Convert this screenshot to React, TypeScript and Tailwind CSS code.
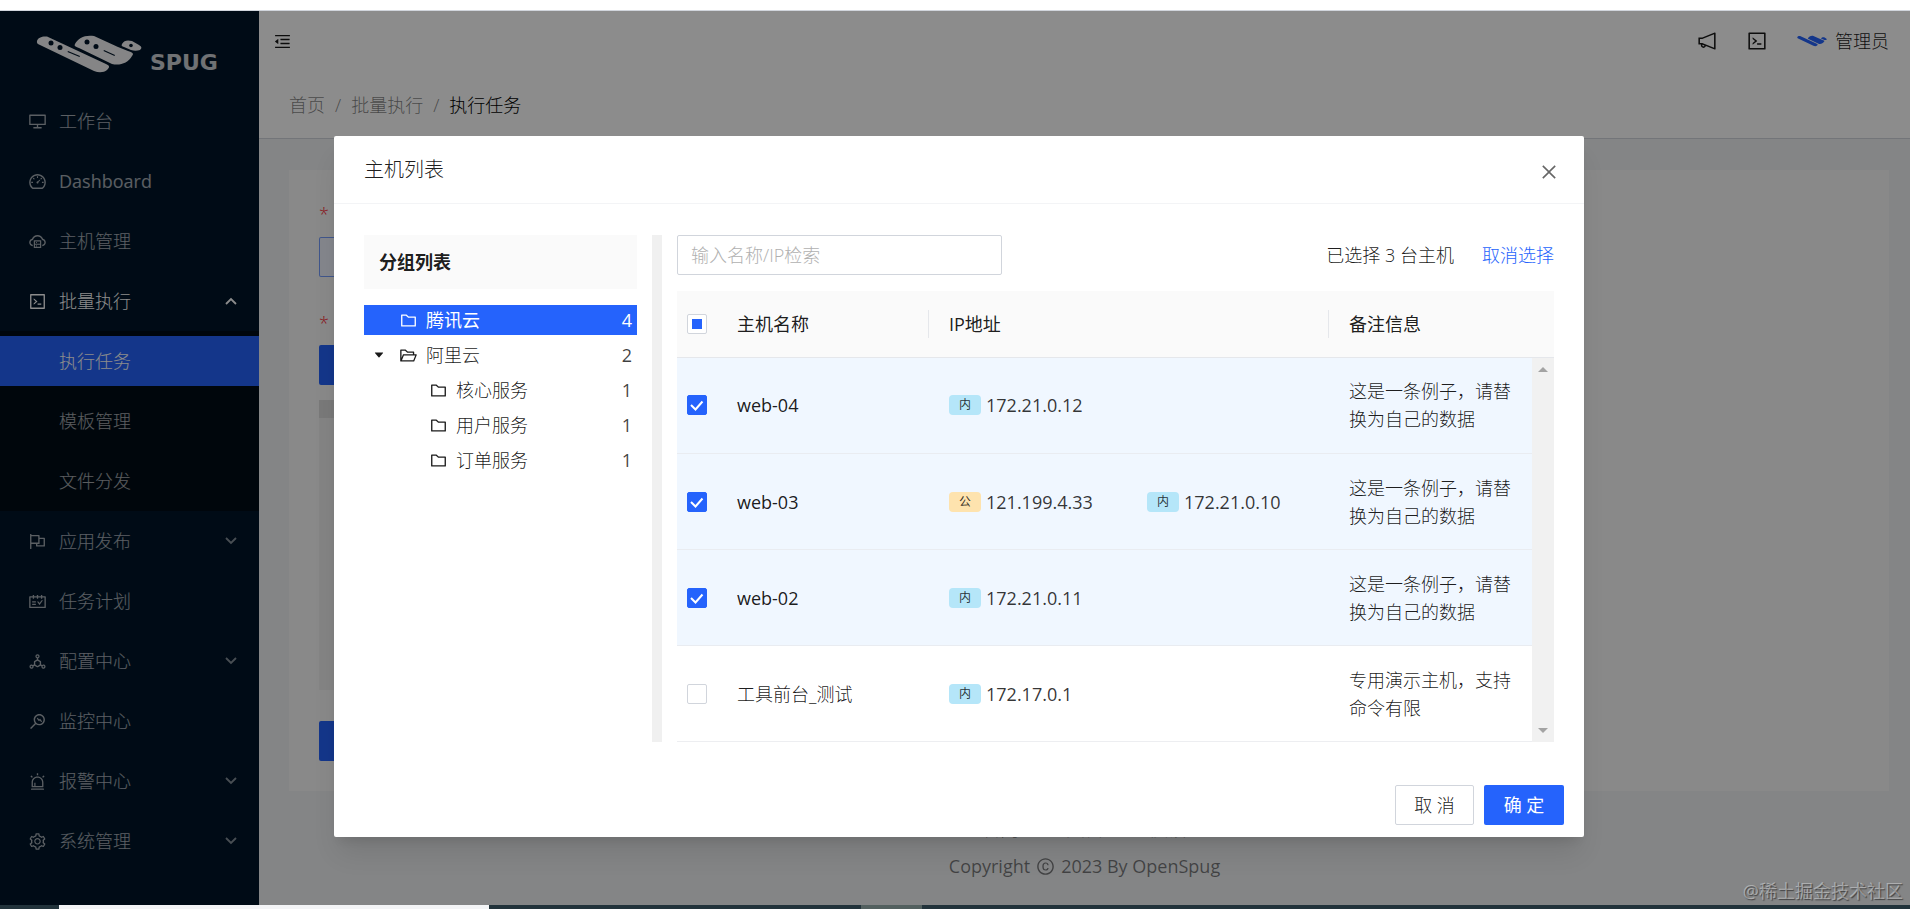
import { useState } from 'react';
import {
    AiOutlineAlert, AiOutlineCloudServer, AiOutlineCode, AiOutlineCopyright, AiOutlineDashboard,
    AiOutlineDeploymentUnit, AiOutlineDesktop, AiOutlineFlag, AiOutlineFolder, AiOutlineFolderOpen,
    AiOutlineMenuFold, AiOutlineMonitor, AiOutlineNotification, AiOutlineSchedule, AiOutlineSetting,
    AiOutlineClose, AiFillCaretDown,
} from 'react-icons/ai';

const menus = [
    { label: '工作台', icon: AiOutlineDesktop },
    { label: 'Dashboard', icon: AiOutlineDashboard },
    { label: '主机管理', icon: AiOutlineCloudServer },
    { label: '批量执行', icon: AiOutlineCode, open: true, children: ['执行任务', '模板管理', '文件分发'] },
    { label: '应用发布', icon: AiOutlineFlag, arrow: true },
    { label: '任务计划', icon: AiOutlineSchedule },
    { label: '配置中心', icon: AiOutlineDeploymentUnit, arrow: true },
    { label: '监控中心', icon: AiOutlineMonitor },
    { label: '报警中心', icon: AiOutlineAlert, arrow: true },
    { label: '系统管理', icon: AiOutlineSetting, arrow: true },
];

const groups = [
    { name: '腾讯云', count: 4, level: 0 },
    { name: '阿里云', count: 2, level: 0, open: true },
    { name: '核心服务', count: 1, level: 1 },
    { name: '用户服务', count: 1, level: 1 },
    { name: '订单服务', count: 1, level: 1 },
];

const hosts = [
    { name: 'web-04', ips: [['内', '172.21.0.12']], desc: '这是一条例子，请替换为自己的数据' },
    { name: 'web-03', ips: [['公', '121.199.4.33'], ['内', '172.21.0.10']], desc: '这是一条例子，请替换为自己的数据' },
    { name: 'web-02', ips: [['内', '172.21.0.11']], desc: '这是一条例子，请替换为自己的数据' },
    { name: '工具前台_测试', ips: [['内', '172.17.0.1']], desc: '专用演示主机，支持命令有限' },
];

// light latin glyphs look too thin next to the chinese ones
const weightOf = (text: string) => (/[\u4e00-\u9fa5]/.test(text) ? 'font-light' : 'font-normal');

function SpugMark({ className, holes }: { className: string; holes?: boolean }) {
    return (
        <svg viewBox="0 0 106 38" className={className} fill="currentColor" aria-hidden="true">
            <path d="M1 6C2 2.500 6 1 11 1.500L70 29C74 31 74 32 71 35C68 37.500 63 38 58 36L4 10C1.500 9 .500 8 1 6Z" />
            <path d="M39 9C42 3 49-.500 58 1L82 12L92 16C97 18 98 18 96 21C92 28 84 31 76 29L43 13C39 11 38 11 39 9Z" />
            <path d="M86 9C88 5 92 5 96 6L103 10C106 12 106 13 104 15C101 16 98 16 95 15L88 12C86 11 85 11 86 9Z" />
            {holes && (
                <g className="fill-[#001529]">
                    <circle cx="15" cy="8" r="2.500" />
                    <circle cx="24" cy="12.500" r="2.500" />
                    <circle cx="51" cy="7" r="2.500" />
                    <circle cx="60" cy="11.500" r="2.500" />
                    <circle cx="95" cy="10.500" r="1.800" />
                    <path d="M32 16L44 21L43.500 22L31.500 17Z" />
                    <path d="M68 15L79 20L78.500 21L67.500 16Z" />
                </g>
            )}
        </svg>
    );
}

function Chevron({ up }: { up?: boolean }) {
    return (
        <svg
            viewBox="0 0 12 8"
            className={`w-3 h-2 ${up ? '' : 'opacity-80'}`}
            fill="none"
            stroke="currentColor"
            strokeWidth="1.800"
            aria-hidden="true"
        >
            <path d={up ? 'M1 7L6 2L11 7' : 'M1 1L6 6L11 1'} />
        </svg>
    );
}

function Sidebar() {
    return (
        <aside className="w-[259px] shrink-0 bg-[#001529] text-white/65">
            <div className="h-20 pl-9 pt-6 flex text-white/95">
                <SpugMark className="w-[106px] h-[38px]" holes />
                <span className="pl-2 pt-[14px] text-[22px] leading-7 font-['DejaVu_Sans'] font-bold text-white/80">SPUG</span>
            </div>
            <nav>
                {menus.map((item) => {
                    const Icon = item.icon;
                    return (
                        <div key={item.label}>
                            <div className="h-[60px] flex items-center">
                                <button className={`w-full h-[50px] pl-7 pr-[22px] flex items-center gap-3 text-left ${item.open ? 'text-white' : ''}`}>
                                    <Icon size={19} />
                                    <span className={`flex-1 ${weightOf(item.label)}`}>{item.label}</span>
                                    {(item.open || item.arrow) && <Chevron up={item.open} />}
                                </button>
                            </div>
                            {item.children && (
                                <div className="bg-[#000c17] py-[5px] flex flex-col gap-[10px]">
                                    {item.children.map((child, i) => (
                                        <a
                                            key={child}
                                            href="#"
                                            className={`h-[50px] pl-[59px] flex items-center ${i === 0 ? 'bg-[#2563fc] text-white' : ''}`}
                                        >
                                            {child}
                                        </a>
                                    ))}
                                </div>
                            )}
                        </div>
                    );
                })}
            </nav>
        </aside>
    );
}

function TaskPage() {
    return (
        <div className="flex-1 flex flex-col bg-[#f0f2f5]">
            <header className="h-[60px] bg-white flex items-center pl-[14px] pr-[21px]">
                <button aria-label="收起菜单"><AiOutlineMenuFold size={19} /></button>
                <div className="ml-auto flex items-center">
                    <AiOutlineNotification size={22} />
                    <AiOutlineCode size={22} className="ml-7" />
                    <SpugMark className="w-[30px] h-[14px] ml-[29px] text-[#2563fc]" />
                    <span className="ml-2">管理员</span>
                </div>
            </header>
            <div className="h-[68px] bg-white border-b border-gray-300 pl-[30px] flex items-center gap-[10px] text-black/50">
                <a href="#">首页</a>
                <span>/</span>
                <a href="#">批量执行</a>
                <span>/</span>
                <span className="text-black">执行任务</span>
            </div>
            <form className="ml-[30px] mr-[21px] mt-[31px] p-[30px] bg-[#fafafa]">
                <div className="h-[37px] leading-7 text-red-500">*</div>
                <div className="w-[400px] h-10 border border-[#2563fc]/60 rounded-xs bg-[#f0f5ff]" />
                <div className="h-[68px] flex items-end pb-2 leading-7 text-red-500">*</div>
                <div className="w-[200px] h-10 rounded-xs bg-[#2563fc]" />
                <div className="mt-[15px] h-[18px] w-[900px] bg-[#dcdcdc]" />
                <div className="h-[272px] w-[900px] bg-[#f0f0f0]" />
                <div className="mt-[31px] w-[120px] h-10 rounded-xs bg-[#2563fc]" />
            </form>
            <footer className="pt-6 text-center text-black/50">
                <div className="h-[37px] flex justify-center gap-12">
                    <a href="#">官网</a>
                    <a href="#">文档</a>
                    <a href="#">反馈</a>
                </div>
                <div className="flex justify-center items-center gap-[6px] font-normal">
                    Copyright <AiOutlineCopyright size={19} /> 2023 By OpenSpug
                </div>
            </footer>
        </div>
    );
}

function CheckBox({ checked, partial, label, onChange }: {
    checked?: boolean; partial?: boolean; label: string; onChange: () => void;
}) {
    return (
        <label className="relative block w-5 h-5">
            <input
                type="checkbox"
                aria-label={label}
                checked={!!checked}
                onChange={onChange}
                className="block w-5 h-5 appearance-none bg-white border border-gray-300 rounded-xs checked:bg-[#2563fc] checked:border-[#2563fc]"
            />
            {partial && <span className="absolute inset-[5px] bg-[#2563fc]" />}
            {checked && (
                <svg viewBox="0 0 20 20" className="absolute inset-0 w-5 h-5" fill="none" stroke="white" strokeWidth="2">
                    <path d="M4 10L8.500 14.500L15.500 6.500" />
                </svg>
            )}
        </label>
    );
}

function GroupTree() {
    return (
        <div className="w-[273px] shrink-0">
            <div className="h-[54px] bg-[#fafafa] px-[15px] flex items-center font-bold">分组列表</div>
            <ul className="mt-4 flex flex-col gap-[5px]">
                {groups.map((g, i) => (
                    <li
                        key={g.name}
                        className={`h-[30px] pr-[5px] flex items-center ${g.level ? 'pl-[65px]' : 'pl-[35px]'} ${i === 0 ? 'bg-[#2563fc] text-white font-normal' : ''}`}
                    >
                        {g.open && <AiFillCaretDown size={12} className="-ml-[26px] mr-[14px]" />}
                        {g.open ? <AiOutlineFolderOpen size={19} /> : <AiOutlineFolder size={19} />}
                        <span className="ml-2 flex-1">{g.name}</span>
                        <span className={`font-normal ${i === 0 ? '' : 'text-black/75'}`}>{g.count}</span>
                    </li>
                ))}
            </ul>
        </div>
    );
}

function HostCols() {
    return (
        <colgroup>
            <col className="w-10" />
            <col className="w-[212px]" />
            <col className="w-[400px]" />
            <col />
        </colgroup>
    );
}

function HostTable() {
    const [selected, setSelected] = useState(['web-04', 'web-03', 'web-02']);
    const toggle = (name: string) =>
        setSelected(selected.includes(name) ? selected.filter((x) => x !== name) : [...selected, name]);
    const all = selected.length === hosts.length;

    return (
        <div className="flex-1">
            <div className="flex items-center">
                <input
                    aria-label="检索"
                    placeholder="输入名称/IP检索"
                    className="w-[325px] h-10 px-[13px] border border-gray-300 rounded-xs placeholder:text-[#b0b0b0]"
                />
                <span className="ml-auto">已选择 {selected.length} 台主机</span>
                <button className="ml-7 text-[#2563fc]" onClick={() => setSelected([])}>取消选择</button>
            </div>
            <table className="mt-4 w-full table-fixed bg-[#fafafa]">
                <HostCols />
                <thead>
                    <tr className="h-[66px] border-b border-gray-200 text-left">
                        <th className="pl-[10px]">
                            <CheckBox
                                label="全选"
                                checked={all}
                                partial={!all && selected.length > 0}
                                onChange={() => setSelected(all ? [] : hosts.map((h) => h.name))}
                            />
                        </th>
                        {['主机名称', 'IP地址', '备注信息'].map((title, i) => (
                            <th key={title} className="font-normal">
                                <div className={`h-7 px-5 flex items-center ${i < 2 ? 'border-r border-gray-200' : ''}`}>{title}</div>
                            </th>
                        ))}
                    </tr>
                </thead>
            </table>
            <div className="flex">
                <table className="flex-1 w-full table-fixed">
                    <HostCols />
                    <tbody>
                        {hosts.map((h) => (
                            <tr key={h.name} className={`h-24 border-b border-gray-200/70 ${selected.includes(h.name) ? 'bg-[#f0f7ff]' : ''}`}>
                                <td className="pl-[10px]">
                                    <CheckBox label={h.name} checked={selected.includes(h.name)} onChange={() => toggle(h.name)} />
                                </td>
                                <td className={`px-5 ${weightOf(h.name)}`}>{h.name}</td>
                                <td className="px-5">
                                    <div className="flex">
                                        {h.ips.map(([kind, ip]) => (
                                            <span key={ip} className="w-[198px] shrink-0 flex items-center gap-[5px] font-normal text-black/80">
                                                <span className={`w-8 h-5 rounded-sm grid place-items-center text-xs ${kind === '内' ? 'bg-[#b5e6f9]' : 'bg-[#fee3ae]'}`}>
                                                    {kind}
                                                </span>
                                                {ip}
                                            </span>
                                        ))}
                                    </div>
                                </td>
                                <td className="px-5">{h.desc}</td>
                            </tr>
                        ))}
                    </tbody>
                </table>
                <div className="w-[22px] bg-[#f1f1f1] py-2 flex flex-col items-center justify-between text-[#a3a3a3]">
                    <svg viewBox="0 0 10 6" className="w-[10px] h-[6px]" fill="currentColor"><path d="M0 6L5 1L10 6Z" /></svg>
                    <svg viewBox="0 0 10 6" className="w-[10px] h-[6px]" fill="currentColor"><path d="M0 0L5 5L10 0Z" /></svg>
                </div>
            </div>
        </div>
    );
}

function HostModal() {
    return (
        <div className="absolute inset-0 bg-black/45 pt-[125px] pl-2 flex justify-center items-start">
            <div role="dialog" aria-label="主机列表" className="w-[1250px] bg-white rounded-xs shadow-xl">
                <div className="h-[68px] px-[30px] flex items-center justify-between border-b border-gray-100">
                    <h2 className="text-xl">主机列表</h2>
                    <button aria-label="关闭" className="-mr-[5px] pt-1 text-black/60"><AiOutlineClose size={20} /></button>
                </div>
                <div className="px-[30px] pt-[31px] flex">
                    <GroupTree />
                    <div className="w-[10px] ml-[15px] mr-[15px] bg-[#f0f0f0]" />
                    <HostTable />
                </div>
                <div className="pt-[43px] pb-3 px-5 flex justify-end gap-[10px]">
                    <button className="w-[79px] h-10 border border-gray-300 rounded-xs">取 消</button>
                    <button className="w-20 h-10 rounded-xs bg-[#2563fc] text-white font-normal">确 定</button>
                </div>
            </div>
        </div>
    );
}

export default function App() {
    return (
        <div className="min-h-screen flex flex-col font-['Open_Sans','Noto_Sans_CJK_SC',sans-serif] font-light text-[18px] leading-7 text-black/90">
            <div className="h-[11px] bg-white border-b border-gray-300" />
            <div className="relative flex-1 flex">
                <Sidebar />
                <TaskPage />
                <HostModal />
                <div className="absolute right-[7px] bottom-0 font-normal text-white/40 [text-shadow:1px_1px_1px_rgb(0_0_0/0.5)]">
                    @稀土掘金技术社区
                </div>
            </div>
            <div className="h-1 bg-[#22333b] flex">
                <div className="ml-[59px] w-[430px] bg-gray-100" />
                <div className="ml-[372px] w-[61px] bg-[#53605f]" />
            </div>
        </div>
    );
}
